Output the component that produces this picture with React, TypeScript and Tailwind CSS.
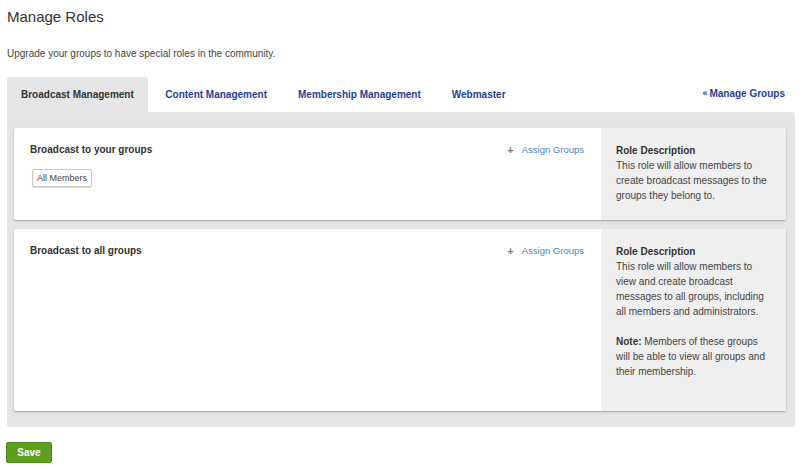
const roles = [
  {
    title: "Broadcast to your groups",
    members: ["All Members"],
    lines: [
      "This role will allow members to",
      "create broadcast messages to the",
      "groups they belong to.",
    ],
    note: null as string[] | null,
    minH: "min-h-[92px]",
  },
  {
    title: "Broadcast to all groups",
    members: [] as string[],
    lines: [
      "This role will allow members to",
      "view and create broadcast",
      "messages to all groups, including",
      "all members and administrators.",
    ],
    note: ["Members of these groups", "will be able to view all groups and", "their membership."],
    minH: "min-h-[182px]",
  },
];

const tabs = ["Content Management", "Membership Management", "Webmaster"];

function RoleCard({ role }: { role: (typeof roles)[number] }) {
  return (
    <div
      className={
        "flex overflow-hidden rounded-[2px] bg-white shadow-[0_1px_2px_rgba(0,0,0,0.3)] " +
        role.minH
      }
    >
      <div className="flex-1 pl-[16px] pr-[17px] pt-[16px]">
        <div className="flex items-center justify-between">
          <p className="text-[10px] font-bold leading-[12px] text-[#333]">
            {role.title}
          </p>
          <a className="flex items-center text-[9.5px] leading-[12px] text-[#4a86c8]">
            <span className="mr-[8px] text-[11px] font-bold text-[#777]">+</span>
            Assign Groups
          </a>
        </div>

        {role.members.length > 0 && (
          <div className="mt-[13px] flex gap-2 pl-[2px]">
            {role.members.map((member) => (
              <span
                key={member}
                className="h-[18px] rounded-[2px] border border-[#c8c8c8] px-[4px] text-[9px] leading-[16px] text-[#444] shadow-[0_1px_1px_rgba(0,0,0,0.15)]"
              >
                {member}
              </span>
            ))}
          </div>
        )}
      </div>

      <div className="w-[185px] bg-[#efefef] pl-[15px] pr-[6px] pt-[15px] pb-[16px] text-[10px] leading-[15px] text-[#444]">
        <p className="font-bold text-[#333]">Role Description</p>
        {role.lines.map((line) => (
          <p key={line} className="whitespace-nowrap">
            {line}
          </p>
        ))}
        {role.note && (
          <div className="mt-[15px]">
            {role.note.map((line, i) => (
              <p key={line} className="whitespace-nowrap">
                {i === 0 && <span className="font-bold text-[#333]">Note: </span>}
                {line}
              </p>
            ))}
          </div>
        )}
      </div>
    </div>
  );
}

export default function App() {
  return (
    <div className="h-[467px] w-[800px] overflow-hidden bg-white font-['Liberation_Sans',Arial,sans-serif] text-[#333]">
      <div className="pl-[7px] pr-[5px]">
        <h1 className="pt-[8px] text-[15px] leading-[18px] text-[#333]">
          Manage Roles
        </h1>

        <p className="mt-[22px] text-[10px] leading-[12px] text-[#444]">
          Upgrade your groups to have special roles in the community.
        </p>

        <div className="mt-[17px] flex h-[35px] items-stretch">
          <div className="mr-[2px] flex items-center rounded-t-[3px] bg-[#e5e5e5] px-[14px] text-[10px] font-bold text-[#333]">
            Broadcast Management
          </div>
          {tabs.map((tab) => (
            <a
              key={tab}
              className="flex items-center px-[15.5px] text-[10px] font-bold text-[#1f3f9a]"
            >
              {tab}
            </a>
          ))}
          <a className="ml-auto mr-[10px] flex items-center pb-[2px] text-[10px] font-bold text-[#1f3f9a]">
            <span className="mr-[2px] text-[9px]">«</span>Manage Groups
          </a>
        </div>

        <div className="flex flex-col gap-[9px] rounded-b-[3px] rounded-tr-[3px] bg-[#e5e5e5] pt-[16px] pb-[16px] pl-[7px] pr-[9px]">
          {roles.map((role) => (
            <RoleCard key={role.title} role={role} />
          ))}
        </div>

        <button
          type="button"
          className="-ml-[1px] mt-[15px] h-[21px] w-[46px] rounded-[2px] border border-[#4b8a12] bg-[#5da01f] text-[10px] font-bold text-white"
        >
          Save
        </button>
      </div>
    </div>
  );
}
